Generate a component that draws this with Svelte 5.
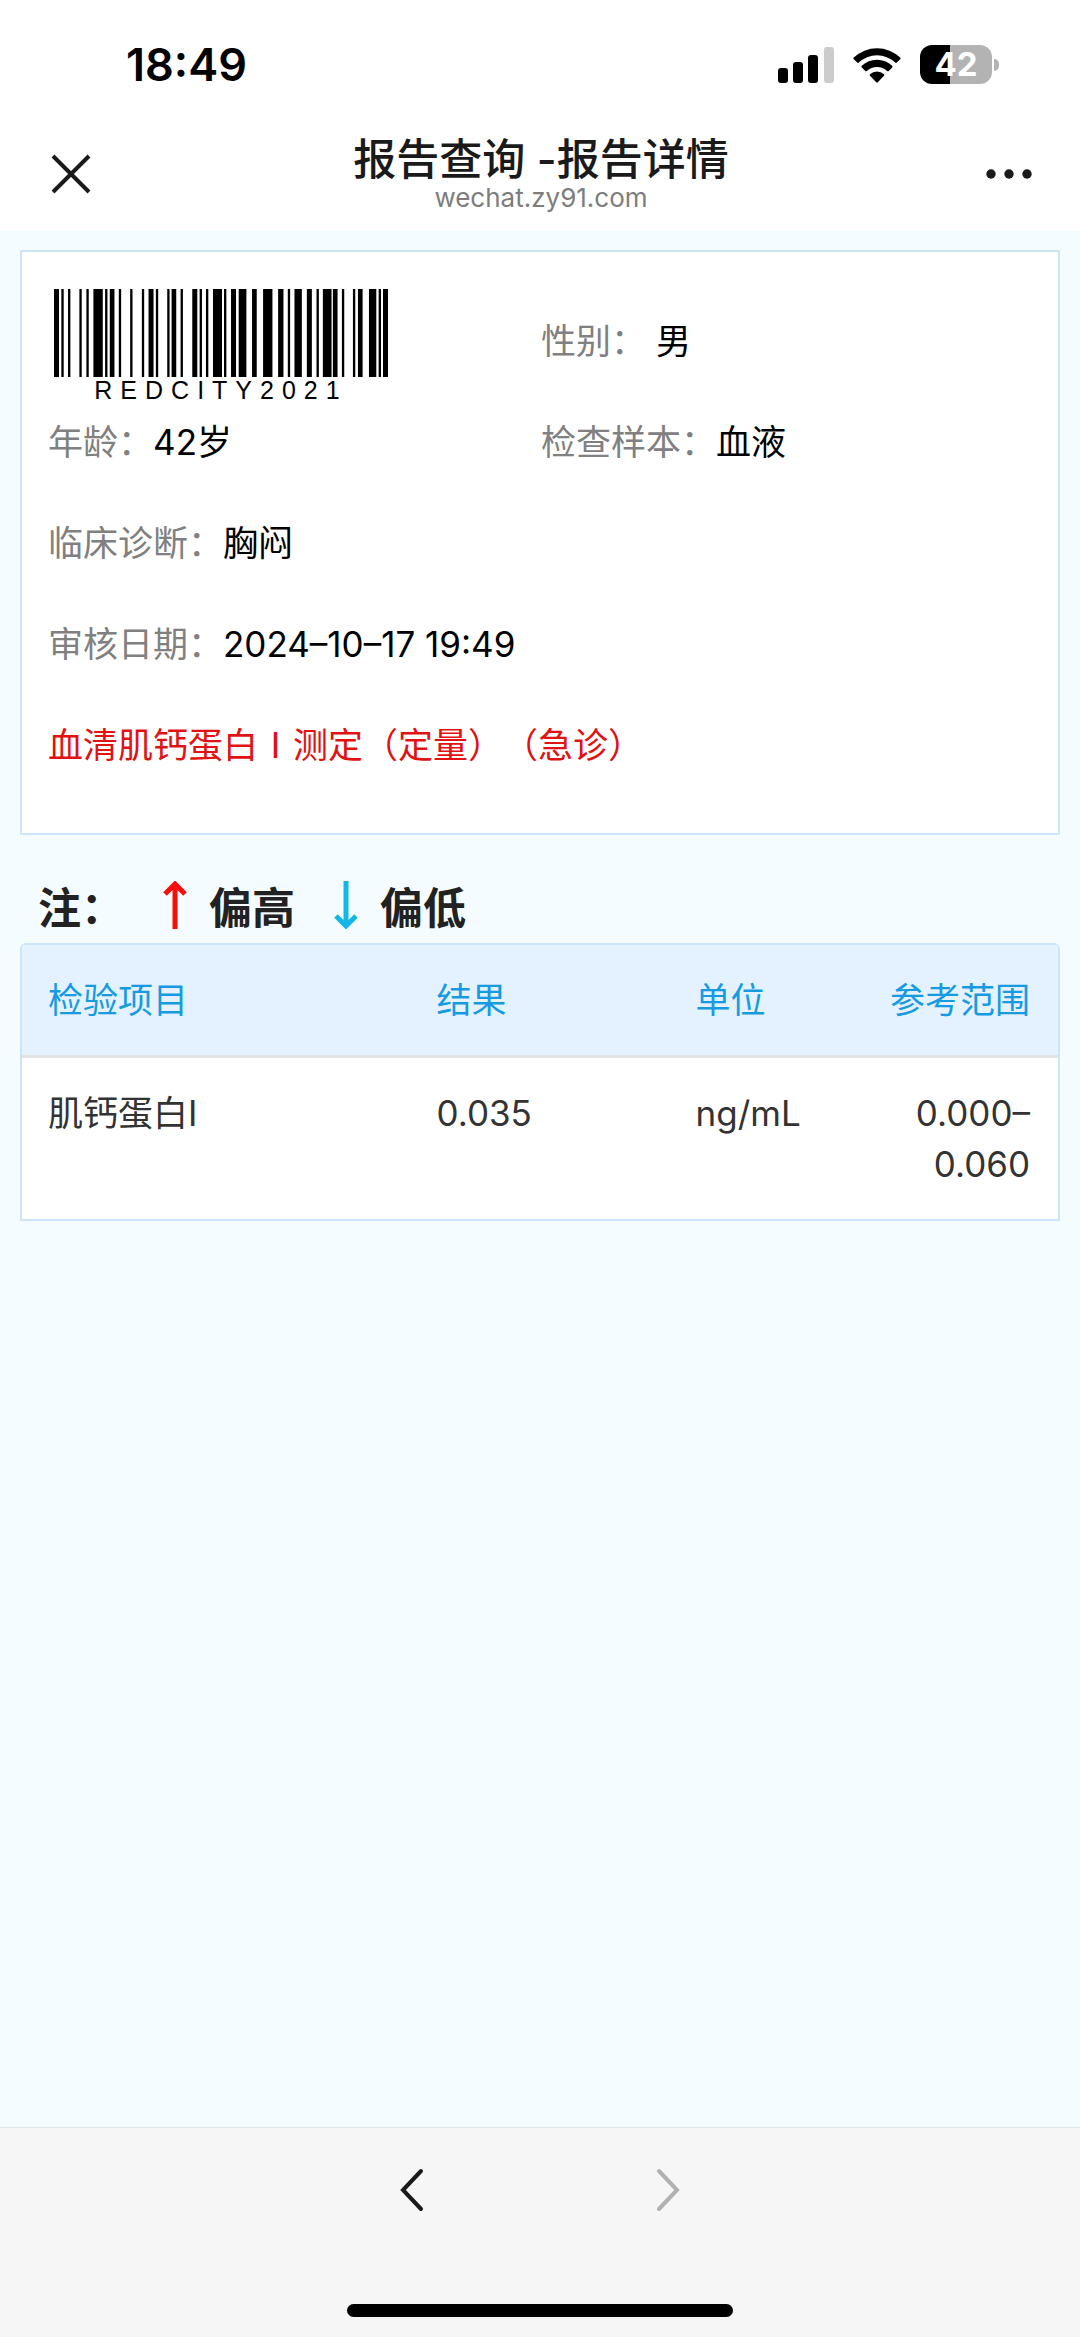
<script>
  // Bars of the code as [offset, width], in thousandths of its total width
  const bars = [
    [0, 15], [22, 7], [42, 7], [76, 7], [97, 7], [118, 28], [153, 7], [167, 14],
    [194, 7], [228, 7], [263, 7], [283, 15], [305, 7], [339, 7], [352, 14], [379, 7],
    [414, 15], [436, 7], [455, 7], [476, 27], [509, 7], [530, 15], [553, 23], [593, 14],
    [626, 28], [671, 16], [700, 7], [720, 22], [757, 15], [786, 7], [805, 26], [835, 14],
    [862, 7], [895, 7], [910, 14], [943, 22], [972, 7], [985, 15]
  ];

  const columns = ['检验项目', '结果', '单位', '参考范围'];
  const results = [{ name: '肌钙蛋白I', value: '0.035', unit: 'ng/mL', range: '0.000–0.060' }];
</script>

<div class="page">
  <div class="status">
    <span class="time">18:49</span>
    <div class="indicators">
      <svg class="signal" viewBox="0 0 56 36" aria-hidden="true">
        <rect x="0" y="21" width="10" height="15" rx="3" />
        <rect x="15" y="15" width="10" height="21" rx="3" />
        <rect x="30" y="8" width="10" height="28" rx="3" />
        <rect x="46" y="0" width="10" height="36" rx="3" fill="#cccccc" />
      </svg>
      <svg class="wifi" viewBox="0 0 48 36" aria-hidden="true">
        <path d="M0.8 10.6 A33.5 33.5 0 0 1 47.2 10.6 Q48 11.4 47.2 12.2 L43.8 15.6 Q43 16.4 42.2 15.6 A26.5 26.5 0 0 0 5.8 15.6 Q5 16.4 4.2 15.6 L0.8 12.2 Q0 11.4 0.8 10.6 Z" />
        <path d="M8.8 18.8 A22 22 0 0 1 39.2 18.8 Q40 19.6 39.2 20.4 L35.7 23.9 Q34.9 24.6 34.1 23.9 A15 15 0 0 0 13.9 23.9 Q13.1 24.6 12.3 23.9 L8.8 20.4 Q8 19.6 8.8 18.8 Z" />
        <path d="M17 27.2 A10.5 10.5 0 0 1 31 27.2 Q31.8 28 31 28.8 L24.8 35.2 Q24 36 23.2 35.2 L17 28.8 Q16.2 28 17 27.2 Z" />
      </svg>
      <div class="battery"><span class="level">42</span><span class="cap"></span></div>
    </div>
  </div>

  <header class="nav">
    <button class="icon" aria-label="关闭">
      <svg width="42" height="42" viewBox="0 0 42 42" fill="none" stroke="#1a1a1a" stroke-width="4">
        <path d="M3 3 L39 39 M39 3 L3 39" />
      </svg>
    </button>
    <div class="heading">
      <h1>报告查询 -报告详情</h1>
      <p>wechat.zy91.com</p>
    </div>
    <button class="icon more" aria-label="更多">
      <svg width="46" height="12" viewBox="0 0 46 12" fill="#1a1a1a">
        <circle cx="5" cy="6" r="4.700" /><circle cx="23" cy="6" r="4.700" /><circle cx="41" cy="6" r="4.700" />
      </svg>
    </button>
  </header>

  <main>
    <section class="card">
      <div class="row">
        <div class="barcode">
          <svg viewBox="0 0 1000 100" preserveAspectRatio="none" aria-hidden="true">
            {#each bars as [x, width]}
              <rect {x} y="0" {width} height="100" />
            {/each}
          </svg>
          <span>REDCITY2021</span>
        </div>
        <p><span class="label">性别：</span><span class="spaced">男</span></p>
      </div>
      <div class="row">
        <p><span class="label">年龄：</span>42岁</p>
        <p><span class="label">检查样本：</span>血液</p>
      </div>
      <div class="row"><p><span class="label">临床诊断：</span>胸闷</p></div>
      <div class="row wide"><p><span class="label">审核日期：</span>2024–10–17 19:49</p></div>
      <div class="row wide"><p class="test">血清肌钙蛋白Ⅰ测定（定量）（急诊）</p></div>
    </section>

    <div class="legend">
      <span>注：</span>
      <span class="key">
        <svg width="24" height="48" viewBox="0 0 24 48" fill="none" stroke="#f80d0d" stroke-width="5">
          <path d="M12 48 V3 M2 13 L12 3 L22 13" />
        </svg>
        偏高
      </span>
      <span class="key">
        <svg width="24" height="48" viewBox="0 0 24 48" fill="none" stroke="#12b7e6" stroke-width="5">
          <path d="M12 0 V45 M2 35 L12 45 L22 35" />
        </svg>
        偏低
      </span>
    </div>

    <div class="panel">
      <table>
        <colgroup>
          <col class="name" />
          <col class="value" />
          <col class="unit" />
          <col class="range" />
        </colgroup>
        <thead>
          <tr>{#each columns as column}<th scope="col">{column}</th>{/each}</tr>
        </thead>
        <tbody>
          {#each results as item}
            <tr>
              <td>{item.name}</td>
              <td>{item.value}</td>
              <td>{item.unit}</td>
              <td>{item.range}</td>
            </tr>
          {/each}
        </tbody>
      </table>
    </div>
  </main>

  <footer>
    <nav class="history">
      <button class="icon" aria-label="后退">
        <svg width="24" height="44" viewBox="0 0 24 44" fill="none" stroke="#1a1a1a" stroke-width="4" stroke-linecap="round">
          <path d="M21 3 L3 22 L21 41" />
        </svg>
      </button>
      <button class="icon" aria-label="前进" disabled>
        <svg width="24" height="44" viewBox="0 0 24 44" fill="none" stroke="#b1b1b1" stroke-width="4" stroke-linecap="round">
          <path d="M3 3 L21 22 L3 41" />
        </svg>
      </button>
    </nav>
    <div class="home"></div>
  </footer>
</div>

<style>
  :global(body) {
    background: #f5fcff;
  }

  .page {
    display: flex;
    flex-direction: column;
    min-height: 100vh;
    box-sizing: border-box;
    font-family: Inter, 'Noto Sans CJK SC', sans-serif;
    font-size: 35px;
    color: #000;
  }

  p,
  h1 {
    margin: 0;
  }

  svg {
    display: block;
  }

  .icon {
    padding: 0;
    border: 0;
    background: none;
  }

  .status {
    display: flex;
    align-items: center;
    justify-content: space-between;
    height: 118px;
    padding: 11px 81px 0 126px;
    box-sizing: border-box;
    background: #fff;
  }

  .time {
    font-size: 45px;
    font-weight: 600;
  }

  .indicators {
    display: flex;
    align-items: center;
    gap: 19px;
  }

  .signal {
    width: 56px;
    height: 36px;
  }

  .wifi {
    width: 48px;
    height: 36px;
  }

  .battery {
    display: flex;
    align-items: center;
    gap: 2px;
  }

  .level {
    width: 72px;
    border-radius: 12px;
    background: linear-gradient(to right, #000 42%, #b3b3b3 42%);
    color: #fff;
    font-size: 33px;
    font-weight: 700;
    line-height: 39px;
    text-align: center;
  }

  .cap {
    width: 5px;
    height: 12px;
    border-radius: 0 6px 6px 0;
    background: #b3b3b3;
  }

  .nav {
    display: grid;
    grid-template-columns: 1fr auto 1fr;
    align-items: center;
    height: 112px;
    padding: 0 48px 0 50px;
    background: #fff;
  }

  .more {
    justify-self: end;
  }

  .heading {
    text-align: center;
  }

  h1 {
    color: #1a1a1a;
    font-size: 43px;
    font-weight: 500;
    line-height: 48px;
  }

  .heading p {
    color: #7d7d7d;
    font-size: 26px;
    line-height: 30px;
  }

  main {
    flex: 1;
    padding: 20px;
  }

  .card {
    padding: 36px 26px 40px;
    border: 2px solid #cde5f9;
    background: #fff;
  }

  .row {
    display: grid;
    grid-template-columns: 493px 1fr;
    grid-template-rows: 101px;
    align-items: center;
  }

  .row.wide {
    grid-template-columns: 1fr;
  }

  .label {
    color: #808080;
  }

  .spaced {
    margin-left: 10px;
  }

  .test {
    color: #e11212;
    font-family: 'Noto Sans CJK SC', sans-serif;
    text-spacing-trim: space-all;
  }

  .barcode {
    display: flex;
    flex-direction: column;
    align-self: start;
    width: 334px;
    margin: 1px 0 0 6px;
    font-family: 'Liberation Sans', sans-serif;
    font-size: 25px;
    line-height: 26px;
    letter-spacing: 8px;
    text-align: center;
  }

  .barcode svg {
    width: 100%;
    height: 88px;
  }

  .legend {
    display: flex;
    align-items: center;
    gap: 39px;
    height: 76px;
    margin-top: 32px;
    padding-left: 18px;
    color: #222;
    font-size: 43px;
    font-weight: 700;
  }

  .key {
    display: flex;
    align-items: center;
    gap: 22px;
  }

  .panel {
    overflow: hidden;
    border: 2px solid #cde5f9;
    border-radius: 6px 6px 0 0;
    background: #fff;
  }

  table {
    width: 100%;
    border-collapse: collapse;
    table-layout: fixed;
    line-height: 51px;
  }

  .name {
    width: 37.5%;
  }

  .value {
    width: 25%;
  }

  .unit {
    width: 17.5%;
  }

  .range {
    width: 20%;
  }

  th,
  td {
    padding: 30px 28px 29px 26px;
    text-align: left;
    vertical-align: top;
    font-weight: 400;
  }

  th {
    border-bottom: 3px solid #e3e3e3;
    background: #e4f1fe;
    color: #169be3;
  }

  td {
    color: #333;
  }

  th:last-child,
  td:last-child {
    padding-left: 0;
    text-align: right;
  }

  footer {
    display: flex;
    flex-direction: column;
    align-items: center;
    justify-content: space-between;
    height: 210px;
    padding: 40px 0 20px;
    border-top: 1px solid #e4e6e6;
    box-sizing: border-box;
    background: #f6f6f6;
  }

  .history {
    display: flex;
    gap: 232px;
  }

  .home {
    width: 386px;
    height: 13px;
    border-radius: 7px;
    background: #000;
  }
</style>
